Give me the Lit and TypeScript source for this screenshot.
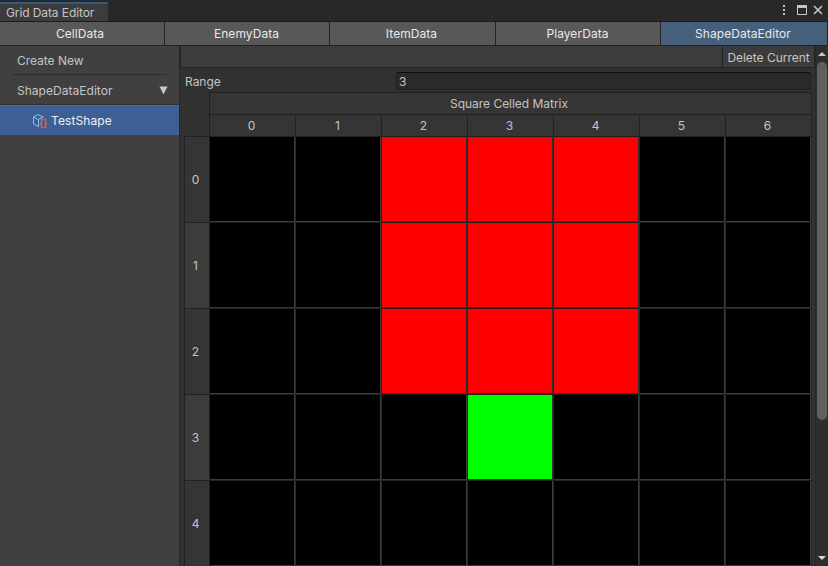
import { LitElement, html, css } from "lit";
import { customElement, property } from "lit/decorators.js";
import { classMap } from "lit/directives/class-map.js";

const TABS = ["CellData", "EnemyData", "ItemData", "PlayerData", "ShapeDataEditor"];
const MATRIX = ["..rrr..", "..rrr..", "..rrr..", "...g...", "......."];

@customElement("shape-matrix")
export class ShapeMatrix extends LitElement {
  @property({ attribute: false }) rows: string[] = [];

  static styles = css`
    :host { display: block; width: 628px; flex: none; }
    .title, .heads { margin-left: 25px; border: 1px solid #212121; border-bottom: 0; background: #353535; display: flex; height: 21px; }
    .title { justify-content: center; align-items: center; box-sizing: content-box; }
    .title span { margin-right: 3px; }
    .head { box-sizing: border-box; width: 86px; border-right: 1px solid #212121; display: flex; align-items: center; justify-content: center; padding-right: 2px; }
    .head:last-child { border-right: 0; width: 85px; }
    .row { display: flex; height: 86px; }
    .label { box-sizing: border-box; width: 26px; border: 1px solid #212121; border-bottom: 0; background: #353535; display: flex; align-items: center; justify-content: center; padding-right: 3px; padding-top: 1px; }
    .label.odd { background: #3c3c3c; }
    .cells { display: flex; border-top: 1px solid #212121; }
    .cell { box-sizing: border-box; width: 86px; height: 85px; border-right: 1px solid #292929; border-bottom: 1px solid #3a3a3a; display: flex; background: #3a3a3a; }
    .fill { width: 84px; background: #000; }
    .r .fill { background: #f00; }
    .g .fill { background: #0f0; }
    .r, .g { background: #303030; border-bottom-color: #303030; }
  `;

  render() {
    return html`
      <div class="title"><span>Square Celled Matrix</span></div>
      <div class="heads">${[0, 1, 2, 3, 4, 5, 6].map((n) => html`<div class="head">${n}</div>`)}</div>
      ${this.rows.map((row, i) => html`
        <div class="row">
          <div class=${classMap({ label: true, odd: i % 2 === 1 })}>${i}</div>
          <div class="cells">
            ${[...row].map((c) => html`<div class=${classMap({ cell: true, r: c === "r", g: c === "g" })}><div class="fill"></div></div>`)}
          </div>
        </div>`)}
    `;
  }
}

@customElement("app-root")
export class AppRoot extends LitElement {
  static styles = css`
    :host { display: flex; flex-direction: column; box-sizing: border-box; width: 828px; height: 566px; overflow: hidden; background: #313131; color: #c4c4c4; font: 12px/16px Inter, "Liberation Sans", sans-serif; letter-spacing: -0.03px; }
    .titlebar { display: flex; height: 21px; flex: none; background: #282828; border-bottom: 1px solid #1b1b1b; align-items: flex-end; justify-content: space-between; }
    .window-tab { box-sizing: border-box; width: 108px; height: 19px; border-top: 2px solid #2c5d87; background: #3c3c3c; padding: 1px 0 0 6px; letter-spacing: -0.1px; }
    .controls { display: flex; height: 21px; }
    .tabs { display: flex; flex: none; height: 23px; border-bottom: 1px solid #232323; }
    .tab { box-sizing: border-box; width: 165px; border-right: 1px solid #232323; background: #585858; color: #e8e8e8; display: flex; align-items: center; justify-content: center; padding-right: 4px; letter-spacing: 0.06px; }
    .tab:nth-child(2) { padding-right: 1px; }
    .tab:nth-child(3) { width: 166px; padding-right: 2px; }
    .tab:nth-child(4) { padding-right: 1px; }
    .tab.on { width: 167px; background: #46607c; padding-right: 2px; }
    .body { display: flex; flex: 1; min-height: 0; }
    .sidebar { width: 179px; flex: none; background: #404040; border-right: 1px solid #272727; }
    .create { height: 28px; margin: 0 12px 0 13px; padding-left: 4px; line-height: 30px; border-bottom: 1px solid #2e2e2e; }
    .group { height: 29px; border-bottom: 1px solid #303030; padding: 0 11px 0 17px; display: flex; align-items: center; justify-content: space-between; letter-spacing: 0.03px; }
    .group span, .group svg { padding-top: 2px; }
    .item { height: 30px; box-sizing: border-box; border-top: 1px solid #4a6794; background: #3e5f96; color: #f0f0f0; display: flex; align-items: center; padding: 1px 0 0 32px; gap: 4px; letter-spacing: 0.1px; }
    .main { width: 635px; flex: none; }
    .toolbar { height: 21px; background: #3c3c3c; border: 1px solid #232323; border-top: 0; display: flex; justify-content: flex-end; box-sizing: content-box; width: 633px; }
    .delete { box-sizing: border-box; width: 92px; border-left: 1px solid #232323; line-height: 24px; text-align: center; }
    .range { display: flex; height: 24px; padding: 4px 0 0 5px; box-sizing: border-box; }
    .range-label { width: 211px; padding-top: 2px; }
    .field { box-sizing: border-box; width: 415px; height: 18px; background: #2a2a2a; border: 1px solid #212121; border-top-color: #0d0d0d; border-radius: 3px; padding: 1px 0 0 2px; }
    shape-matrix { margin-left: 4px; }
    .scroll { box-sizing: border-box; width: 13px; background: #2e2e2e; border-left: 1px solid #292929; display: flex; flex-direction: column; align-items: center; }
    .arrow { height: 16px; flex: none; }
    .track { flex: 1; }
    .thumb { width: 10px; height: 358px; border-radius: 5px; background: #5f5f5f; }
    svg { display: block; flex: none; }
  `;

  render() {
    return html`
      <div class="titlebar">
        <div class="window-tab">Grid Data Editor</div>
        <div class="controls">
          <svg width="50" height="21" fill="#c4c4c4">
            <path d="M5 5h2v2H5zM5 9h2v2H5zM5 13h2v2H5z" />
            <path fill-rule="evenodd" d="M19 5h10v10H19zM20 8v6h8V8z" />
            <path d="M36 6l8 8M44 6l-8 8" stroke="#c4c4c4" stroke-width="1.6" />
          </svg>
        </div>
      </div>
      <div class="tabs">${TABS.map((t, i) => html`<div class=${classMap({ tab: true, on: i === 4 })}>${t}</div>`)}</div>
      <div class="body">
        <div class="sidebar">
          <div class="create">Create New</div>
          <div class="group">
            <span>ShapeDataEditor</span>
            <svg width="9" height="9"><path d="M0.5 0.5h8l-4 8z" fill="#c8c8c8" /></svg>
          </div>
          <div class="item">
            <svg width="15" height="16" fill="none">
              <path d="M6.5 13.5L1.500 11V4L6 1.500 11 4V5M1.500 4L6.500 6.500 11 4M6.500 6.500v7" stroke="#7ccdf2" stroke-width="1" />
              <path d="M11 6.500H9.500v3L8.500 10.500l1 1v3H11M12 6.500h1.500v3l1 1-1 1v3H12" stroke="#ff5a28" stroke-width="1.400" />
            </svg>
            <span>TestShape</span>
          </div>
        </div>
        <div class="main">
          <div class="toolbar"><div class="delete">Delete Current</div></div>
          <div class="range"><div class="range-label">Range</div><div class="field">3</div></div>
          <shape-matrix .rows=${MATRIX}></shape-matrix>
        </div>
        <div class="scroll">
          <svg class="arrow" width="10" height="16"><path d="M1 10h8L5 6z" fill="#c8c8c8" /></svg>
          <div class="track"><div class="thumb"></div></div>
          <svg class="arrow" width="10" height="16"><path d="M1 6h8l-4 4z" fill="#d8d8d8" /></svg>
        </div>
      </div>
    `;
  }
}
